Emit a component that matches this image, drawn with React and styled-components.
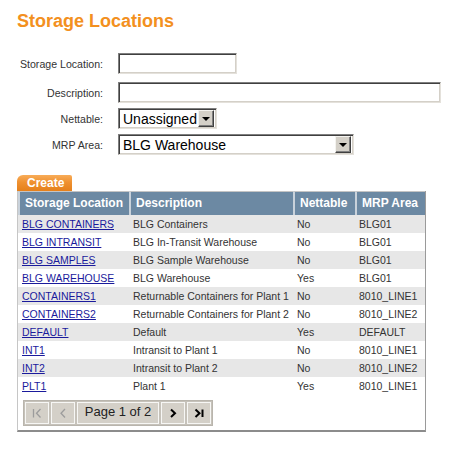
import React from 'react';
import styled, { createGlobalStyle } from 'styled-components';

const GlobalStyle = createGlobalStyle`
  html, body {
    margin: 0;
    padding: 0;
    background: #fff;
  }
  body {
    font-family: "Liberation Sans", Arial, sans-serif;
  }
`;

const Page = styled.div`
  width: 462px;
  box-sizing: border-box;
  padding: 10px 0 0 17px;
`;

const Title = styled.h1`
  margin: 0;
  font-size: 18px;
  line-height: 22px;
  font-weight: bold;
  color: #f39020;
`;

const Form = styled.div`
  margin-top: 21px;
  display: flex;
  flex-direction: column;
`;

const FormRow = styled.div`
  display: flex;
  align-items: center;
  margin-top: ${({ $gap }) => $gap || 0}px;
`;

const Label = styled.label`
  width: 86px;
  margin-right: 15px;
  text-align: right;
  font-size: 10.6px;
  color: #333;
`;

const inset = `
  box-sizing: border-box;
  height: 21px;
  border: 1px solid;
  border-color: #7f7f7f #e4e1db #e4e1db #7f7f7f;
  box-shadow: inset 1px 1px 0 #404040, inset -1px -1px 0 #d4d0c8;
  background: #fff;
`;

const TextInput = styled.input`
  ${inset}
  width: ${({ $width }) => $width}px;
  margin: 0;
  padding: 0 3px;
  font: 14px "Liberation Sans", Arial, sans-serif;
  outline: none;
`;

const SelectBox = styled.div`
  ${inset}
  width: ${({ $width }) => $width}px;
  display: flex;
  align-items: center;
  padding: 0 2px 0 4px;
  font-size: 14px;
  color: #000;
`;

const SelectValue = styled.span`
  flex: 1;
  white-space: nowrap;
`;

const ArrowButton = styled.span`
  box-sizing: border-box;
  width: 16px;
  height: 17px;
  display: flex;
  align-items: center;
  justify-content: center;
  background: #d4d0c8;
  border: 1px solid;
  border-color: #f4f3ef #404040 #404040 #f4f3ef;
  box-shadow: inset -1px -1px 0 #808080;

  &::after {
    content: '';
    margin-top: 1px;
    border-left: 4px solid transparent;
    border-right: 4px solid transparent;
    border-top: 4px solid #000;
  }
`;

const Tab = styled.div`
  margin-top: 20px;
  width: 55px;
  height: 16px;
  box-sizing: border-box;
  padding-left: 10px;
  line-height: 16px;
  font-size: 12px;
  font-weight: bold;
  color: #fff;
  border-top-left-radius: 6px;
  border-top-right-radius: 2px;
  background: linear-gradient(to bottom, #f8ac58 0%, #ef9130 45%, #e5801b 100%);
`;

const Panel = styled.div`
  width: 409px;
  box-sizing: border-box;
  border-left: 1px solid #c6c6c6;
  border-right: 1px solid #9a9a9a;
  border-bottom: 2px solid #8c8c8c;
  background: #fff;
`;

const Table = styled.table`
  width: 407px;
  table-layout: fixed;
  border-collapse: separate;
  border-spacing: 0;
`;

const HeadCell = styled.th`
  padding: 0 0 0 5px;
  line-height: 23px;
  text-align: left;
  font-size: 12px;
  font-weight: bold;
  color: #fff;
  white-space: nowrap;
  background: #6c89a3;
  border-top: 1px solid #c4c4c4;
  border-left: 2px solid #c9d2db;
`;

const Row = styled.tr`
  background: ${({ $shaded }) => ($shaded ? '#e7e7e7' : '#fff')};
`;

const Cell = styled.td`
  padding: 0 2px 0 4px;
  line-height: 18px;
  font-size: 10.5px;
  color: #333;
  white-space: nowrap;
  overflow: hidden;
`;

const Link = styled.a`
  color: #1a1a9c;
  text-decoration: underline;
`;

const PagerBar = styled.div`
  padding: 5px 0 4px 5px;
`;

const PagerFrame = styled.div`
  display: inline-flex;
  gap: 2px;
  padding: 1px;
  border: 1px solid #b9b5ad;
  background: #c6c2ba;
`;

const PagerButton = styled.div`
  box-sizing: border-box;
  width: ${({ $wide }) => ($wide ? 82 : 24)}px;
  height: 22px;
  display: flex;
  align-items: center;
  justify-content: center;
  background: #d4d0c8;
  border: 1px solid #f7f7f5;
`;

const PageLabel = styled.span`
  font-size: 13px;
  color: #222;
  padding-bottom: 3px;
`;

const rows = [
  ['BLG CONTAINERS', 'BLG Containers', 'No', 'BLG01'],
  ['BLG INTRANSIT', 'BLG In-Transit Warehouse', 'No', 'BLG01'],
  ['BLG SAMPLES', 'BLG Sample Warehouse', 'No', 'BLG01'],
  ['BLG WAREHOUSE', 'BLG Warehouse', 'Yes', 'BLG01'],
  ['CONTAINERS1', 'Returnable Containers for Plant 1', 'No', '8010_LINE1'],
  ['CONTAINERS2', 'Returnable Containers for Plant 2', 'No', '8010_LINE2'],
  ['DEFAULT', 'Default', 'Yes', 'DEFAULT'],
  ['INT1', 'Intransit to Plant 1', 'No', '8010_LINE1'],
  ['INT2', 'Intransit to Plant 2', 'No', '8010_LINE2'],
  ['PLT1', 'Plant 1', 'Yes', '8010_LINE1'],
];

const columns = [
  { title: 'Storage Location', width: 111 },
  { title: 'Description', width: 164 },
  { title: 'Nettable', width: 62 },
  { title: 'MRP Area', width: 70 },
];

const PagerIcon = ({ kind, enabled }) => {
  const color = enabled ? '#000' : '#9c9c9c';
  const w = enabled ? 2 : 1.3;
  return (
    <svg width="12" height="12" viewBox="0 0 12 12" fill="none" stroke={color} strokeWidth={w}>
      {kind === 'first' && (
        <>
          <line x1="2.5" y1="2" x2="2.5" y2="10.5" />
          <polyline points="9.5,2 5.5,6.2 9.5,10.5" />
        </>
      )}
      {kind === 'prev' && <polyline points="8,2 4,6.2 8,10.5" />}
      {kind === 'next' && <polyline points="4,2.5 8,6.2 4,10" />}
      {kind === 'last' && (
        <>
          <polyline points="2.5,2.5 6.5,6.2 2.5,10" />
          <line x1="9.5" y1="2.5" x2="9.5" y2="10" />
        </>
      )}
    </svg>
  );
};

const Select = ({ width, value }) => (
  <SelectBox $width={width}>
    <SelectValue>{value}</SelectValue>
    <ArrowButton />
  </SelectBox>
);

export default function App() {
  return (
    <Page>
      <GlobalStyle />
      <Title>Storage Locations</Title>

      <Form>
        <FormRow>
          <Label>Storage Location:</Label>
          <TextInput $width={119} />
        </FormRow>
        <FormRow $gap={8}>
          <Label>Description:</Label>
          <TextInput $width={323} />
        </FormRow>
        <FormRow $gap={5}>
          <Label>Nettable:</Label>
          <Select width={99} value="Unassigned" />
        </FormRow>
        <FormRow $gap={5}>
          <Label>MRP Area:</Label>
          <Select width={236} value="BLG Warehouse" />
        </FormRow>
      </Form>

      <Tab>Create</Tab>
      <Panel>
        <Table>
          <colgroup>
            {columns.map((c) => <col key={c.title} style={{ width: c.width }} />)}
          </colgroup>
          <thead>
            <tr>
              {columns.map((c) => <HeadCell key={c.title}>{c.title}</HeadCell>)}
            </tr>
          </thead>
          <tbody>
            {rows.map((r, i) => (
              <Row key={r[0]} $shaded={i % 2 === 0}>
                <Cell><Link href="#">{r[0]}</Link></Cell>
                <Cell>{r[1]}</Cell>
                <Cell>{r[2]}</Cell>
                <Cell>{r[3]}</Cell>
              </Row>
            ))}
          </tbody>
        </Table>
        <PagerBar>
          <PagerFrame>
            <PagerButton><PagerIcon kind="first" /></PagerButton>
            <PagerButton><PagerIcon kind="prev" /></PagerButton>
            <PagerButton $wide><PageLabel>Page 1 of 2</PageLabel></PagerButton>
            <PagerButton><PagerIcon kind="next" enabled /></PagerButton>
            <PagerButton><PagerIcon kind="last" enabled /></PagerButton>
          </PagerFrame>
        </PagerBar>
      </Panel>
    </Page>
  );
}
